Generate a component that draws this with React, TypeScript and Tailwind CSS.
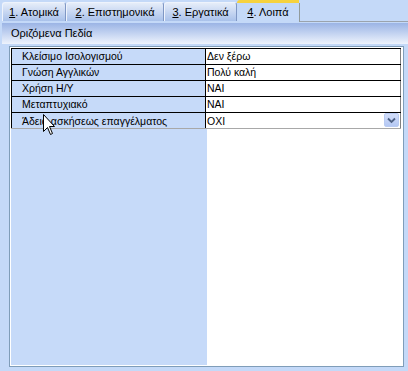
import React from "react";

const font = { fontFamily: '"Liberation Sans", Arial, sans-serif' };

function Tab({ n, label, w }: { n: string; label: string; w: string }) {
  return (
    <div
      className={`${w} h-[19px] mt-[2px] flex items-center justify-center text-[11px] text-black border-t border-l border-[#eef3fc] border-r border-r-[#7f97c4] rounded-t-[3px] bg-gradient-to-b from-[#e6edf9] to-[#a9c1ea]`}
    >
      <span>
        <span className="underline">{n}</span>. {label}
      </span>
    </div>
  );
}

const rows = [
  ["Κλείσιμο Ισολογισμού", "Δεν ξέρω"],
  ["Γνώση Αγγλικών", "Πολύ καλή"],
  ["Χρήση Η/Υ", "ΝΑΙ"],
  ["Μεταπτυχιακό", "ΝΑΙ"],
];

export default function App() {
  return (
    <div
      className="w-[408px] h-[371px] bg-[#c4d9f8] relative overflow-hidden text-black"
      style={font}
    >
      {/* tabs */}
      <div className="h-[22px] flex items-start pl-[2px]">
        <Tab n="1" label="Ατομικά" w="w-[64px]" />
        <Tab n="2" label="Επιστημονικά" w="w-[98px]" />
        <Tab n="3" label="Εργατικά" w="w-[73px]" />
        <div className="w-[63px] h-[22px] flex flex-col">
          <div className="h-[3px] bg-[#f6d23e] rounded-tl-[3px] mr-[1px]" />
          <div className="flex-1 flex items-center justify-center text-[11px] border-r border-[#919b9c] bg-[#c4d9f8]">
            <span>
              <span className="underline">4</span>. Λοιπά
            </span>
          </div>
        </div>
        <div className="flex-1 h-[22px] border-b border-[#9aa3ad]" />
      </div>

      {/* header */}
      <div className="ml-[2px] mt-[1px] h-[21px] bg-gradient-to-b from-[#9bb4e5] to-[#eef3fc] flex items-center pl-[9px] text-[11px]">
        Οριζόμενα Πεδία
      </div>

      {/* panel */}
      <div className="ml-[9px] mt-[2px] w-[395px] h-[321px] border border-[#7f9db9]">
        <div className="w-full h-full border border-white relative flex">
          <div className="w-[196px] h-full bg-[#c6daf9]" />
          <div className="flex-1 h-full bg-white" />
          <div className="absolute left-0 top-0 w-[390px] flex flex-col text-[10.5px]">
            <div className="border-t border-black" />
            {rows.map(([k, v]) => (
              <div key={k} className="flex h-[16px] border-b border-black">
                <div className="w-[195px] border-l border-black border-r border-r-black bg-[#c6daf9] pl-[10px] leading-[15px] whitespace-nowrap">
                  {k}
                </div>
                <div className="flex-1 bg-white pl-[1px] leading-[15px] border-r border-[#808080] whitespace-nowrap">
                  {v}
                </div>
              </div>
            ))}
            <div className="flex h-[16px] border-b border-[#a8a8a8] shadow-[inset_0_1px_0_#b0b0b0]">
              <div className="w-[195px] border-l border-black border-r border-r-black bg-[#c6daf9] pl-[10px] leading-[15px] pt-[1px] whitespace-nowrap">
                Άδεια ασκήσεως επαγγέλματος
              </div>
              <div className="flex-1 bg-white pl-[1px] leading-[15px] pt-[1px] border-r border-[#808080] relative whitespace-nowrap">
                ΟΧΙ
                <div className="absolute right-[1px] top-[0px] w-[15px] h-[14px] rounded-[2px] border border-[#b9cbf3] bg-gradient-to-b from-[#d3def9] to-[#b4c8f4] flex items-center justify-center">
                  <svg width="9" height="7" viewBox="0 0 9 7">
                    <path d="M1 1.5 L4.5 5 L8 1.5" fill="none" stroke="#4d6185" strokeWidth="1.8" />
                  </svg>
                </div>
              </div>
            </div>
          </div>
        </div>
      </div>

      {/* mouse cursor */}
      <svg
        className="absolute left-[43px] top-[114px]"
        width="13"
        height="22"
        viewBox="0 0 13 22"
      >
        <path
          d="M0.5 0.5 L0.5 17.5 L4.5 13.5 L7.5 20.5 L9.5 19.5 L6.5 12.5 L11.5 12.5 Z"
          fill="white"
          stroke="black"
          strokeWidth="1"
          strokeLinejoin="miter"
        />
      </svg>
    </div>
  );
}
